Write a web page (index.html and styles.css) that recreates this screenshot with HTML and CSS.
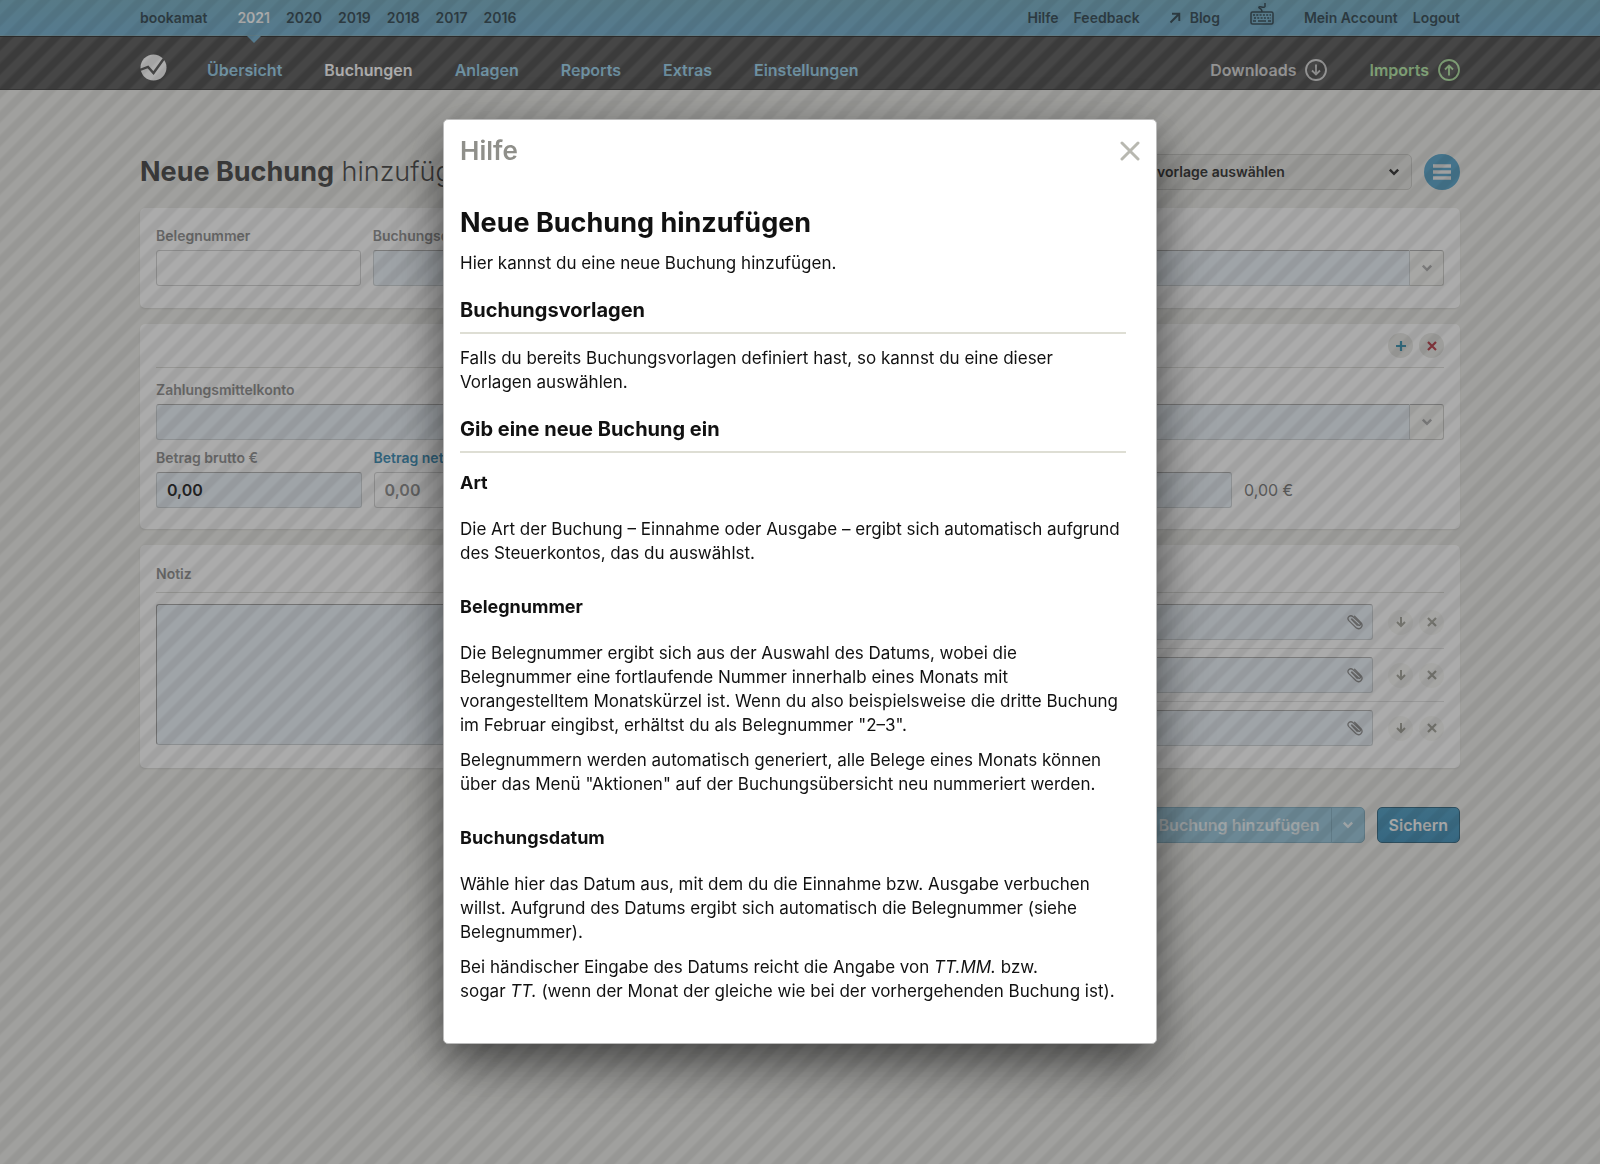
FILE: index.html
```html
<!DOCTYPE html>
<html lang="de">
<head>
<meta charset="utf-8">
<meta name="viewport" content="width=device-width, initial-scale=1">
<title>bookamat – Neue Buchung</title>
<link rel="stylesheet" href="styles.css">
</head>
<body>
<svg class="sprite" aria-hidden="true">
  <symbol id="chevron" viewBox="0 0 10 10"><path d="M1.5 3l3.5 3.5L8.500 3" fill="none" stroke="currentColor" stroke-width="2"/></symbol>
  <symbol id="cross" viewBox="0 0 10 10"><path d="M1 1l8 8M9 1l-8 8" fill="none" stroke="currentColor" stroke-width="2.2"/></symbol>
  <symbol id="plus" viewBox="0 0 10 10"><path d="M5 0v10M0 5h10" fill="none" stroke="currentColor" stroke-width="2.2"/></symbol>
  <symbol id="down" viewBox="0 0 12 12"><path d="M6 1v9M2 6l4 4 4-4" fill="none" stroke="currentColor" stroke-width="2"/></symbol>
  <symbol id="clip" viewBox="0 0 18 18"><path d="M6 6l6.500 6c1 1 2.600-.5 1.600-1.600L7 3.700C4.300 1.300.3 4.500 2.800 7.600l7 6.900c3.600 3.200 8.200-1 5.200-4.800L8.600 3.300M5.500 6.200l5.700 6" fill="none" stroke="currentColor" stroke-width="1.300" stroke-linecap="round"/></symbol>
</svg>

<header>
  <div class="topbar">
    <div class="wrap bar">
      <a class="brand" href="#">bookamat</a>
      <nav class="years" aria-label="Jahre">
        <a class="current" href="#">2021</a><a href="#">2020</a><a href="#">2019</a><a href="#">2018</a><a href="#">2017</a><a href="#">2016</a>
      </nav>
      <nav class="service" aria-label="Service">
        <a href="#">Hilfe</a>
        <a href="#">Feedback</a>
        <a class="blog" href="#"><svg width="12" height="12" viewBox="0 0 12 12"><path d="M1.500 10.500l8.500-8.500M3 1.700h7.300V9" fill="none" stroke="currentColor" stroke-width="1.900"/></svg>Blog</a>
        <a class="keys" href="#" aria-label="Tastenkürzel"><svg width="24" height="22" viewBox="0 0 24 22" fill="none" stroke="currentColor" stroke-width="1.500"><rect x="1" y="9" width="22" height="12" rx="1.500"/><path d="M12 9c0-5-4-3-3-5 1-1.500 5 2 6-.5V0"/><path d="M3 12h18M4 15h17" stroke-dasharray="2 1.300" stroke-width="1.700"/><path d="M3 18h3M8 18h8M18 18h3"/></svg></a>
        <a href="#">Mein Account</a>
        <a href="#">Logout</a>
      </nav>
    </div>
  </div>
  <div class="mainbar">
    <div class="wrap bar">
      <a class="logo" href="#" aria-label="Startseite"><svg width="27" height="27" viewBox="0 0 27 27"><circle cx="13.500" cy="13.500" r="13" fill="currentColor"/><path d="M0 16l8-3 5.500 6L24 4.500" fill="none" stroke="#4a4a4a" stroke-width="2.400"/></svg></a>
      <nav class="mainnav" aria-label="Hauptmenü">
        <a href="#">Übersicht</a><a class="current" href="#">Buchungen</a><a href="#">Anlagen</a><a href="#">Reports</a><a href="#">Extras</a><a href="#">Einstellungen</a>
      </nav>
      <nav class="transfer" aria-label="Dateien">
        <a href="#">Downloads<svg width="22" height="22" viewBox="0 0 22 22" fill="none" stroke="currentColor" stroke-width="1.800"><circle cx="11" cy="11" r="10"/><path d="M11 5.500v10M7 11.500l4 4 4-4"/></svg></a>
        <a class="imports" href="#">Imports<svg width="22" height="22" viewBox="0 0 22 22" fill="none" stroke="currentColor" stroke-width="1.800"><circle cx="11" cy="11" r="10"/><path d="M11 16.500v-10M7 10.500l4-4 4 4"/></svg></a>
      </nav>
    </div>
  </div>
</header>

<main class="wrap">
  <div class="titlebar">
    <h1><b>Neue Buchung</b> hinzufügen</h1>
    <div class="template">
      <select aria-label="Buchungsvorlage"><option>Buchungsvorlage auswählen</option></select>
      <svg width="12" height="12"><use href="#chevron"/></svg>
    </div>
    <button class="menu" type="button" aria-label="Menü"><svg width="18" height="16" viewBox="0 0 18 16"><path d="M0 2h18M0 8h18M0 14h18" stroke="currentColor" stroke-width="3.500"/></svg></button>
  </div>

  <form>
    <section class="card">
      <div class="grid">
        <div class="field"><label for="nr">Belegnummer</label><input class="plain" id="nr" type="text"></div>
        <div class="field"><label for="date">Buchungsdatum</label><input id="date" type="text"></div>
        <div class="field wide"><label for="title">Titel</label>
          <div class="combo"><input id="title" type="text"><button type="button" aria-label="Titel öffnen"><svg width="12" height="12"><use href="#chevron"/></svg></button></div></div>
      </div>
    </section>

    <section class="card booking">
      <div class="tools">
        <button class="round add" type="button" aria-label="Hinzufügen"><svg width="10" height="10"><use href="#plus"/></svg></button>
        <button class="round del" type="button" aria-label="Entfernen"><svg width="10" height="10"><use href="#cross"/></svg></button>
      </div>
      <div class="field"><label for="account">Zahlungsmittelkonto</label>
        <div class="combo"><input id="account" type="text"><button type="button" aria-label="Konto öffnen"><svg width="12" height="12"><use href="#chevron"/></svg></button></div></div>
      <div class="amounts">
        <div class="field"><label for="gross">Betrag brutto €</label><input id="gross" type="text" value="0,00"></div>
        <div class="field net"><label for="netto">Betrag netto €</label><input class="plain" id="netto" type="text" value="0,00"></div>
        <div class="field tax"><label for="tax">USt.</label><input id="tax" type="text"></div>
        <output>0,00 €</output>
      </div>
    </section>

    <section class="card notes">
      <div class="field">
        <label for="note">Notiz</label>
        <textarea id="note"></textarea>
      </div>
      <div class="files">
        <span class="fileshead">Belege</span>
        <div class="file"><div class="pick"><input type="text" aria-label="Beleg 1"><svg width="18" height="18"><use href="#clip"/></svg></div><button class="round" type="button" aria-label="Nach unten"><svg width="12" height="12"><use href="#down"/></svg></button><button class="round" type="button" aria-label="Entfernen"><svg width="10" height="10"><use href="#cross"/></svg></button></div>
        <div class="file"><div class="pick"><input type="text" aria-label="Beleg 2"><svg width="18" height="18"><use href="#clip"/></svg></div><button class="round" type="button" aria-label="Nach unten"><svg width="12" height="12"><use href="#down"/></svg></button><button class="round" type="button" aria-label="Entfernen"><svg width="10" height="10"><use href="#cross"/></svg></button></div>
        <div class="file"><div class="pick"><input type="text" aria-label="Beleg 3"><svg width="18" height="18"><use href="#clip"/></svg></div><button class="round" type="button" aria-label="Nach unten"><svg width="12" height="12"><use href="#down"/></svg></button><button class="round" type="button" aria-label="Entfernen"><svg width="10" height="10"><use href="#cross"/></svg></button></div>
      </div>
    </section>

    <div class="actions">
      <div class="split">
        <button type="button">Neue Buchung hinzufügen</button>
        <button class="more" type="button" aria-label="Weitere Optionen"><svg width="12" height="12"><use href="#chevron"/></svg></button>
      </div>
      <button class="save" type="submit">Sichern</button>
    </div>
  </form>
</main>

<div class="overlay">
  <div class="modal" role="dialog" aria-modal="true" aria-labelledby="dialog-title">
    <div class="modal-head">
      <h2 id="dialog-title">Hilfe</h2>
      <button type="button" aria-label="Schließen"><svg width="20" height="20" viewBox="0 0 20 20"><path d="M2 2l16 16M18 2L2 18" stroke="currentColor" stroke-width="3" stroke-linecap="round"/></svg></button>
    </div>
    <article class="help">
      <h1>Neue Buchung hinzufügen</h1>
      <p>Hier kannst du eine neue Buchung hinzufügen.</p>
      <h2>Buchungsvorlagen</h2>
      <p>Falls du bereits Buchungsvorlagen definiert hast, so kannst du eine dieser Vorlagen auswählen.</p>
      <h2>Gib eine neue Buchung ein</h2>
      <h3>Art</h3>
      <p>Die Art der Buchung – Einnahme oder Ausgabe – ergibt sich automatisch aufgrund des Steuerkontos, das du auswählst.</p>
      <h3>Belegnummer</h3>
      <p>Die Belegnummer ergibt sich aus der Auswahl des Datums, wobei die Belegnummer eine fortlaufende Nummer innerhalb eines Monats mit vorangestelltem Monatskürzel ist. Wenn du also beispielsweise die dritte Buchung im Februar eingibst, erhältst du als Belegnummer "2–3".</p>
      <p>Belegnummern werden automatisch generiert, alle Belege eines Monats können über das Menü "Aktionen" auf der Buchungsübersicht neu nummeriert werden.</p>
      <h3>Buchungsdatum</h3>
      <p>Wähle hier das Datum aus, mit dem du die Einnahme bzw. Ausgabe verbuchen willst. Aufgrund des Datums ergibt sich automatisch die Belegnummer (siehe Belegnummer).</p>
      <p>Bei händischer Eingabe des Datums reicht die Angabe von <em>TT.MM.</em> bzw. sogar&nbsp;<em>TT.</em>&nbsp;(wenn der Monat der gleiche wie bei der vorhergehenden Buchung ist).</p>
    </article>
  </div>
</div>
</body>
</html>
```
FILE: styles.css
```css
* { box-sizing: border-box; }

body {
  margin: 0;
  min-height: 100vh;
  background: #e9e9e5;
  color: #3a3a3a;
  font: 14px/20px Inter, "Liberation Sans", sans-serif;
}

h1, h2, h3, p { margin: 0; }
a { color: inherit; text-decoration: none; }
button, input, select, textarea { font: inherit; color: inherit; margin: 0; }
button { border: 0; padding: 0; background: none; }
svg { display: block; flex: none; }
.sprite { display: none; }

.wrap { max-width: 1320px; margin: 0 auto; }
.bar { display: flex; align-items: center; height: 100%; }

/* Header */
.topbar {
  height: 36px;
  background: linear-gradient(#6ba8be, #68a8ca);
  border-bottom: 1px solid #77aabb;
  color: #243c48;
  font-size: 14px;
  font-weight: 600;
}
.years { display: flex; align-self: stretch; align-items: center; gap: 16px; margin-left: 30px; }
.years .current { position: relative; color: #fff; }
.years .current::after {
  content: "";
  position: absolute;
  left: 50%;
  top: 28px;
  margin-left: -7px;
  border: 7px solid transparent;
  border-top-color: #68a8ca;
  border-bottom: 0;
}
.service { display: flex; align-items: center; gap: 15px; margin-left: auto; }
.blog { display: flex; align-items: center; gap: 9px; margin-left: 14px; }
.keys { margin: -8px 15px 0; }

.mainbar {
  height: 54px;
  background:
    linear-gradient(135deg, rgba(0,0,0,.16) 2%, transparent 9% 28%, rgba(0,0,0,.16) 36% 52%, transparent 59% 78%, rgba(0,0,0,.16) 86%) 0 0 / 24px 24px fixed,
    #4e4e4e;
  border-top: 1px solid #222;
  border-bottom: 1px solid #333;
  font-size: 16px;
  font-weight: 600;
}
.mainbar .bar { padding-top: 14px; }
.logo { color: #fff; margin: 0 40px 6px 0; }
.mainnav { display: flex; gap: 42px; color: #94d0ec; }
.mainnav .current { color: #fff; }
.transfer { display: flex; gap: 42px; margin-left: auto; color: #d4d4d4; }
.transfer a { display: flex; align-items: center; gap: 9px; }
.transfer .imports { color: #b0e8a0; }

/* Title row */
.titlebar { display: flex; align-items: center; gap: 12px; padding: 64px 0 18px; }
.titlebar h1 { margin-right: auto; font-size: 27px; line-height: 36px; font-weight: 300; }
.titlebar b { font-weight: 700; }
.template { position: relative; }
.template select {
  appearance: none;
  width: 336px;
  height: 36px;
  padding: 0 12px;
  border: 1px solid #c4c4c0;
  border-radius: 5px;
  background: #e0e0dc;
  color: #222;
  font-size: 14px;
  font-weight: 600;
}
.template svg { position: absolute; right: 12px; top: 12px; color: #222; }
.menu {
  display: grid;
  place-items: center;
  width: 36px;
  height: 36px;
  border-radius: 50%;
  background: #4a9cc4;
  color: #e8e8e8;
}

/* Form cards */
.card {
  margin-bottom: 16px;
  padding: 16px 16px 22px;
  border-radius: 5px;
  background: #fbfbfb;
  box-shadow: 0 1px 2px rgba(0, 0, 0, .1);
  color: #858585;
}
.grid { display: grid; grid-template-columns: repeat(6, 1fr); gap: 12px; }
.wide { grid-column: span 4; }
.field { display: flex; flex-direction: column; gap: 2px; min-width: 0; }
label, .fileshead { padding: 2px 0; font-size: 14px; font-weight: 600; }
input, textarea {
  width: 100%;
  min-width: 0;
  height: 36px;
  padding: 0 10px;
  border: 1px solid #c8ced1;
  border-top-color: #a8a8a8;
  border-radius: 3px;
  background: #e7eff6;
  color: #111;
  font-size: 16px;
  font-weight: 600;
  resize: none;
}
input.plain { border-color: #ccc; background: #fbfbfb; }
.combo { display: flex; }
.combo input { flex: 1; border-radius: 3px 0 0 3px; }
.combo button {
  display: grid;
  place-items: center;
  width: 34px;
  border: 1px solid #c8c8c4;
  border-top-color: #a8a8a8;
  border-left: 0;
  border-radius: 0 3px 3px 0;
  background: #f4f4f1;
  color: #aaa;
}

.booking { padding-top: 0; padding-bottom: 21px; }
.tools {
  display: flex;
  align-items: center;
  justify-content: flex-end;
  gap: 6px;
  height: 44px;
  margin-bottom: 10px;
  border-bottom: 1px solid #d8d8d4;
}
.round {
  display: grid;
  place-items: center;
  flex: none;
  width: 25px;
  height: 25px;
  border-radius: 50%;
  background: #f3f3f0;
  color: #9c9c92;
}
.tools .round { background: #e4e4e0; }
.tools .add { color: #2c8cac; }
.tools .del { color: #b4303c; }
.amounts {
  display: grid;
  grid-template-columns: repeat(5, 1fr) 200px;
  align-items: end;
  gap: 12px;
  padding-top: 6px;
}
.net label { color: #2c84b0; }
.net input { color: #858585; }
.tax { grid-column: span 3; }
output { padding: 8px 0; font-size: 16px; color: #707070; }

.notes { display: grid; grid-template-columns: 1fr 1fr; }
.notes label, .fileshead {
  display: block;
  margin-bottom: 9px;
  padding: 3px 0 8px;
  border-bottom: 1px solid #d8d8d4;
}
.notes textarea { height: 141px; border-color: #999 #c4cacd #c4cacd #999; }
.fileshead { margin-bottom: 11px; padding-left: 12px; }
.file { display: flex; align-items: center; gap: 6px; margin-left: 12px; }
.file + .file { margin-top: 8px; padding-top: 8px; border-top: 1px solid #ddd; }
.pick { position: relative; flex: 1; margin-right: 9px; }
.pick svg { position: absolute; right: 9px; top: 9px; }

/* Actions */
.actions { display: flex; justify-content: flex-end; gap: 12px; padding-top: 23px; color: #f4f4f4; font-size: 16px; font-weight: 600; }
.actions button { height: 36px; }
.split { display: flex; border: 1px solid #7aa8bc; border-radius: 5px; background: #90c0d6; color: #e4eef2; }
.split button { height: 34px; padding: 0 11px; }
.split .more { padding: 0 10px; border-left: 1px solid #7aa8bc; }
.save { padding: 0 11px; border: 1px solid #245c78; border-radius: 5px; background: linear-gradient(#4094bc, #3488b4); }

/* Dialog */
.overlay {
  position: fixed;
  inset: 0;
  display: flex;
  justify-content: center;
  align-items: flex-start;
  padding: 119px 16px 16px;
  overflow: auto;
  background:
    linear-gradient(135deg, rgba(0,0,0,.06) 2%, transparent 9% 28%, rgba(0,0,0,.06) 36% 52%, transparent 59% 78%, rgba(0,0,0,.06) 86%) 0 0 / 24px 24px,
    rgba(60, 60, 60, .42);
}
.modal {
  width: 714px;
  padding: 0 16px 40px;
  border: 1px solid #bbb;
  border-radius: 5px;
  background: #fff;
  color: #111;
  box-shadow: 0 18px 50px rgba(0, 0, 0, .6);
}
.modal-head { display: flex; align-items: center; justify-content: space-between; height: 62px; color: #8f8f8a; }
.modal-head h2 { font-size: 26px; line-height: 32px; font-weight: 600; }
.modal-head button { color: #b8b8b0; }
.help { padding: 23px 14px 0 0; font-size: 17px; line-height: 24px; }
.help h1 { margin-bottom: 10px; font-size: 27px; line-height: 36px; font-weight: 700; }
.help h2 {
  margin: 21px 0 12px;
  padding-bottom: 8px;
  border-bottom: 2px solid #deded4;
  font-size: 20px;
  line-height: 28px;
  font-weight: 700;
}
.help h3 { margin: 18px 0 22px; font-size: 18px; line-height: 24px; font-weight: 700; }
.help p + p { margin-top: 11px; }
.help p + h3 { margin-top: 30px; }
```
